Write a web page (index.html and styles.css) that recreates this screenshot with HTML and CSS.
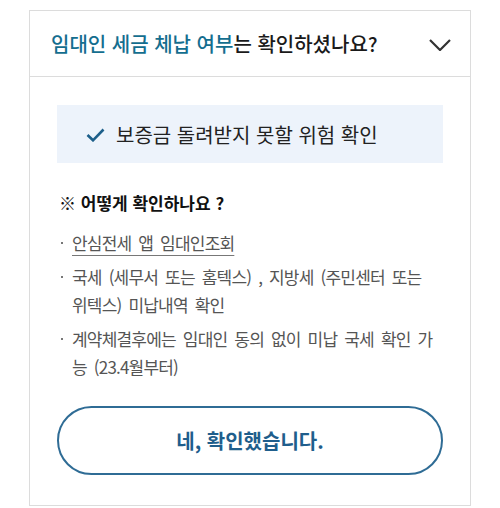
FILE: index.html
```html
<!DOCTYPE html>
<html lang="ko">
<head>
<meta charset="utf-8">
<link rel="stylesheet" href="styles.css">
</head>
<body>
<div class="card">
  <div class="card-head">
    <h2 class="title"><span class="accent">임대인 세금 체납 여부</span>는 확인하셨나요?</h2>
    <svg class="chevron" width="22" height="12" viewBox="0 0 22 12"><path d="M1 1 L11 11 L21 1" fill="none" stroke="#333" stroke-width="2.2"/></svg>
  </div>
  <div class="card-body">
    <div class="check-box">
      <svg class="check" width="19" height="14" viewBox="0 0 19 14"><path d="M1.5 7 L7 12.3 L17.5 1.5" fill="none" stroke="#1d5f8a" stroke-width="2.6"/></svg>
      <span>보증금 돌려받지 못할 위험 확인</span>
    </div>
    <p class="how">※ 어떻게 확인하나요 ?</p>
    <ul class="list">
      <li><span class="link">안심전세 앱 임대인조회</span></li>
      <li>국세 (세무서 또는 홈텍스) , 지방세 (주민센터 또는 위텍스) 미납내역 확인</li>
      <li>계약체결후에는 임대인 동의 없이 미납 국세 확인 가능 (23.4월부터)</li>
    </ul>
    <button class="confirm">네, 확인했습니다.</button>
  </div>
</div>
</body>
</html>
```
FILE: styles.css
```css
* { box-sizing: border-box; }
body {
  margin: 0;
  background: #fff;
  font-family: "Noto Sans CJK KR", "Noto Sans", sans-serif;
  color: #222;
}
.card {
  margin: 10px 29px 0;
  width: 442px;
  border: 1px solid #dcdcdc;
}
.card-head {
  height: 66px;
  display: flex;
  align-items: center;
  justify-content: space-between;
  padding: 0 19px 0 21px;
  border-bottom: 1px solid #dcdcdc;
}
.title {
  margin: 0;
  font-size: 20px;
  font-weight: 500;
  color: #1a1a1a;
}
.accent { color: #146e8f; }
.chevron { margin-top: 2px; }
.card-body {
  padding: 28px 27px 30px;
}
.check-box {
  height: 58px;
  background: #edf3fb;
  display: flex;
  align-items: center;
  padding-left: 29px;
  gap: 11px;
  font-size: 20px;
  color: #222;
}
.check { flex: none; margin-top: 2px; }
.how {
  margin: 28px 0 0 2px;
  font-size: 17px;
  font-weight: 700;
  line-height: 24px;
  color: #111;
}
.list {
  list-style: none;
  margin: 14px 0 0;
  padding: 0;
  display: flex;
  flex-direction: column;
  gap: 6px;
}
.list li {
  position: relative;
  padding-left: 15px;
  font-size: 17px;
  line-height: 28px;
  letter-spacing: -0.8px;
  word-spacing: 3px;
  color: #555;
}
.list li::before {
  content: "";
  position: absolute;
  left: 4px;
  top: 13px;
  width: 2px;
  height: 2px;
  background: #777;
}
.link {
  text-decoration: underline;
  text-decoration-color: #777;
  text-underline-offset: 5px;
  color: #555;
}
.confirm {
  display: block;
  width: 100%;
  height: 69px;
  margin-top: 25px;
  border: 2px solid #2f6c95;
  border-radius: 35px;
  background: #fff;
  font-family: inherit;
  font-size: 20px;
  font-weight: 700;
  color: #1f5e8c;
}
```
